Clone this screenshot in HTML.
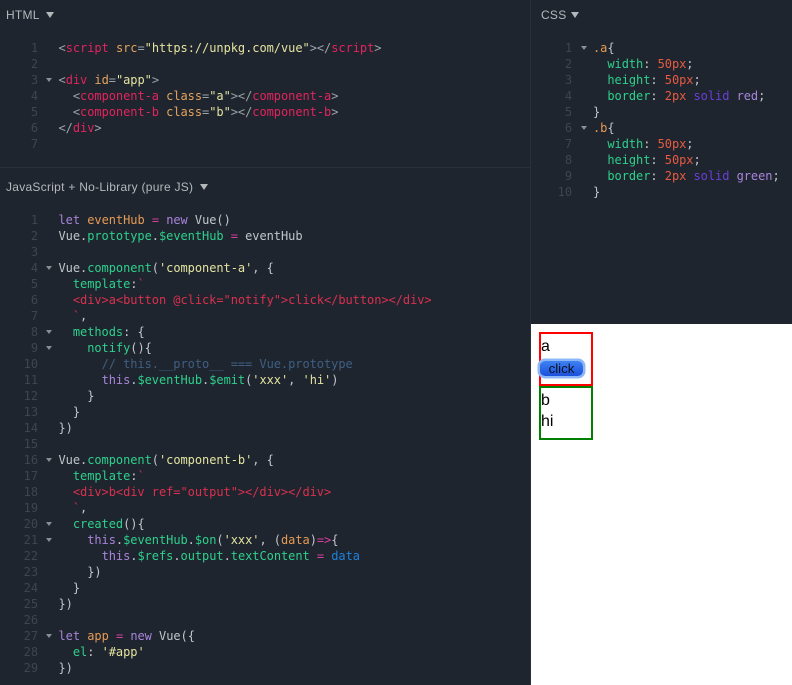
<!DOCTYPE html>
<html>
<head>
<meta charset="utf-8">
<style>
html,body{margin:0;padding:0;width:792px;height:685px;overflow:hidden;background:#1f252e}
pre{margin:0;position:absolute;font-family:"DejaVu Sans Mono","Liberation Mono",monospace;font-size:12px;line-height:16px;letter-spacing:-.05px;color:#c2c6cc}
.n{color:#3f454f;text-align:right}
.hd{position:absolute;font:12px/16px "Liberation Sans",sans-serif;color:#b4b8bd;white-space:nowrap;letter-spacing:.27px}
.tri{position:absolute;width:0;height:0;border-left:4px solid transparent;border-right:4px solid transparent;border-top:6px solid #b4b8bd}
.f{position:absolute;width:0;height:0;border-left:3.5px solid transparent;border-right:3.5px solid transparent;border-top:4px solid #8a8f96}
.t{color:#e0245e}.a{color:#e3a35c}.s{color:#e3e3a0}.p{color:#9ea3aa}
.g{color:#2dd08c}.k{color:#a884dc}.v{color:#e59a55}.o{color:#d63f9e}.c{color:#3f5f82}.r{color:#d9304f}.b{color:#1e80dc}
.u{color:#e65a42}.l{color:#6a3fd6}.m{color:#a884dc}
#vl{position:absolute;left:530px;top:0;width:1px;height:685px;background:#2a303a}
#hl{position:absolute;left:0;top:167px;width:530px;height:1px;background:#2a303a}
#pv{position:absolute;left:531px;top:324px;width:261px;height:361px;background:#fff;font:16px/18px "Liberation Sans",sans-serif;color:#000}
.box{position:absolute;left:8px;width:50px;height:50px;border:2px solid}
.txt{position:absolute;left:10px}
#btn{position:absolute;left:9px;top:37px;width:43px;height:15px;border-radius:5px;background:linear-gradient(#3f82f2,#1a50da);box-shadow:0 0 0 2.5px #8db8f8;font:13.3px/15px "Liberation Sans",sans-serif;color:#0a1020;text-align:center}
</style>
</head>
<body>
<div id="vl"></div><div id="hl"></div>

<div class="hd" style="left:6px;top:7px">HTML</div><div class="tri" style="left:46px;top:12px"></div>
<div class="hd" style="left:6px;top:179px">JavaScript + No-Library (pure JS)</div><div class="tri" style="left:200px;top:184px"></div>
<div class="hd" style="left:541px;top:7px">CSS</div><div class="tri" style="left:571px;top:12px"></div>

<pre class="n" style="left:8px;top:40px;width:30px">1
2
3
4
5
6
7</pre>
<div class="f" style="left:46px;top:78px"></div>
<pre style="left:58.5px;top:40px"><span class="p">&lt;</span><span class="t">script</span> <span class="a">src</span><span class="p">=</span><span class="s">"https://unpkg.com/vue"</span><span class="p">&gt;&lt;/</span><span class="t">script</span><span class="p">&gt;</span>

<span class="p">&lt;</span><span class="t">div</span> <span class="a">id</span><span class="p">=</span><span class="s">"app"</span><span class="p">&gt;</span>
  <span class="p">&lt;</span><span class="t">component-a</span> <span class="a">class</span><span class="p">=</span><span class="s">"a"</span><span class="p">&gt;&lt;/</span><span class="t">component-a</span><span class="p">&gt;</span>
  <span class="p">&lt;</span><span class="t">component-b</span> <span class="a">class</span><span class="p">=</span><span class="s">"b"</span><span class="p">&gt;&lt;/</span><span class="t">component-b</span><span class="p">&gt;</span>
<span class="p">&lt;/</span><span class="t">div</span><span class="p">&gt;</span></pre>

<pre class="n" style="left:8px;top:212px;width:30px">1
2
3
4
5
6
7
8
9
10
11
12
13
14
15
16
17
18
19
20
21
22
23
24
25
26
27
28
29</pre>
<div class="f" style="left:46px;top:266px"></div>
<div class="f" style="left:46px;top:330px"></div>
<div class="f" style="left:46px;top:346px"></div>
<div class="f" style="left:46px;top:458px"></div>
<div class="f" style="left:46px;top:522px"></div>
<div class="f" style="left:46px;top:538px"></div>
<div class="f" style="left:46px;top:634px"></div>
<pre style="left:58.5px;top:212px"><span class="k">let</span> <span class="v">eventHub</span> <span class="o">=</span> <span class="k">new</span> Vue()
Vue.<span class="g">prototype</span>.<span class="g">$eventHub</span> <span class="o">=</span> eventHub

Vue.<span class="g">component</span>(<span class="s">'component-a'</span>, {
  <span class="g">template</span>:<span class="r">`</span>
  <span class="r">&lt;div&gt;a&lt;button @click="notify"&gt;click&lt;/button&gt;&lt;/div&gt;</span>
  <span class="r">`</span>,
  <span class="g">methods</span>: {
    <span class="g">notify</span>(){
      <span class="c">// this.__proto__ === Vue.prototype</span>
      <span class="k">this</span>.<span class="g">$eventHub</span>.<span class="g">$emit</span>(<span class="s">'xxx'</span>, <span class="s">'hi'</span>)
    }
  }
})

Vue.<span class="g">component</span>(<span class="s">'component-b'</span>, {
  <span class="g">template</span>:<span class="r">`</span>
  <span class="r">&lt;div&gt;b&lt;div ref="output"&gt;&lt;/div&gt;&lt;/div&gt;</span>
  <span class="r">`</span>,
  <span class="g">created</span>(){
    <span class="k">this</span>.<span class="g">$eventHub</span>.<span class="g">$on</span>(<span class="s">'xxx'</span>, (<span class="v">data</span>)<span class="o">=&gt;</span>{
      <span class="k">this</span>.<span class="g">$refs</span>.<span class="g">output</span>.<span class="g">textContent</span> <span class="o">=</span> <span class="b">data</span>
    })
  }
})

<span class="k">let</span> <span class="v">app</span> <span class="o">=</span> <span class="k">new</span> Vue({
  <span class="g">el</span>: <span class="s">'#app'</span>
})</pre>

<pre class="n" style="left:542px;top:40px;width:30px">1
2
3
4
5
6
7
8
9
10</pre>
<div class="f" style="left:581px;top:46px"></div>
<div class="f" style="left:581px;top:126px"></div>
<pre style="left:593px;top:40px"><span class="v">.a</span>{
  <span class="g">width</span>: <span class="u">50px</span>;
  <span class="g">height</span>: <span class="u">50px</span>;
  <span class="g">border</span>: <span class="u">2px</span> <span class="l">solid</span> <span class="m">red</span>;
}
<span class="v">.b</span>{
  <span class="g">width</span>: <span class="u">50px</span>;
  <span class="g">height</span>: <span class="u">50px</span>;
  <span class="g">border</span>: <span class="u">2px</span> <span class="l">solid</span> <span class="m">green</span>;
}</pre>

<div id="pv">
  <div class="box" style="top:8px;border-color:#f00"></div>
  <div class="box" style="top:62px;border-color:#008000"></div>
  <div class="txt" style="top:14px">a</div>
  <div id="btn">click</div>
  <div class="txt" style="top:68px">b</div>
  <div class="txt" style="top:89px">hi</div>
</div>
</body>
</html>
